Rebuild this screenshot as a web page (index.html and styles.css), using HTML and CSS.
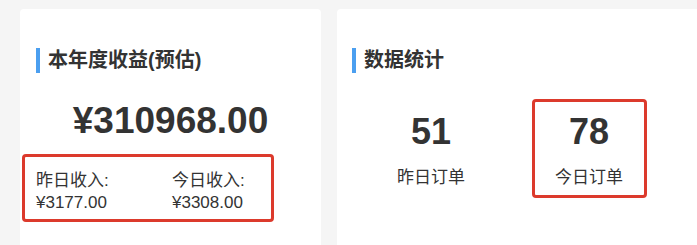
FILE: index.html
```html
<!DOCTYPE html>
<html lang="zh-CN">
<head>
    <meta charset="UTF-8">
    <meta name="viewport" content="width=device-width, initial-scale=1.0">
    <title>收益统计</title>
    <link rel="stylesheet" href="styles.css">
</head>
<body>
    <div class="page">
        <div class="card card-income">
            <div class="card-title">本年度收益(预估)</div>
            <div class="income-total">¥310968.00</div>
            <div class="income-row">
                <div class="income-item">
                    <div>昨日收入:</div>
                    <div>¥3177.00</div>
                </div>
                <div class="income-item">
                    <div>今日收入:</div>
                    <div>¥3308.00</div>
                </div>
            </div>
        </div>
        <div class="card card-stats">
            <div class="card-title">数据统计</div>
            <div class="stats-row">
                <div class="stat-col">
                    <div class="stat-item">
                        <div class="stat-num">51</div>
                        <div class="stat-label">昨日订单</div>
                    </div>
                </div>
                <div class="stat-col">
                    <div class="stat-item active">
                        <div class="stat-num">78</div>
                        <div class="stat-label">今日订单</div>
                    </div>
                </div>
            </div>
        </div>
    </div>
</body>
</html>
```

FILE: styles.css
```css
html, body {
    margin: 0;
    padding: 0;
    background-color: #f5f5f5;
    overflow: hidden;
}
body {
    font-family: "Liberation Sans", Arial, "Noto Sans CJK SC", sans-serif;
    color: #333;
}
.page {
    display: flex;
    gap: 16px;
    padding: 9px 0 0 20px;
    width: 900px;
}
.card {
    background-color: #fff;
    border-radius: 4px;
    height: 260px;
    padding: 39px 16px 0;
    box-sizing: border-box;
}
.card-income {
    width: 301px;
}
.card-stats {
    width: 380px;
    padding-left: 15px;
}
.card-title {
    border-left: 4px solid #4b9ff0;
    padding-left: 8px;
    height: 25px;
    line-height: 25px;
    font-size: 20px;
    font-weight: bold;
}
.income-total {
    margin-top: 29px;
    text-align: center;
    font-size: 37px;
    line-height: 37px;
    font-weight: bold;
}
.income-row {
    margin: 15px 0 0 -14px;
    width: 252px;
    box-sizing: border-box;
    border: 3px solid #dc3a2c;
    border-radius: 4px;
    padding: 13px 0 5px 11px;
    display: grid;
    grid-template-columns: 136px auto;
    font-size: 17px;
    line-height: 22px;
}
.stats-row {
    margin-top: 26px;
    display: grid;
    grid-template-columns: 158px 158px;
}
.stat-col {
    display: flex;
    justify-content: center;
}
.stat-item {
    width: 115px;
    height: 99px;
    box-sizing: border-box;
    border: 3px solid transparent;
    border-radius: 4px;
    padding-top: 12px;
    text-align: center;
}
.stat-item.active {
    border-color: #dc3a2c;
}
.stat-num {
    font-size: 36px;
    line-height: 36px;
    font-weight: bold;
}
.stat-label {
    margin-top: 17px;
    font-size: 17px;
    line-height: 22px;
}
```
